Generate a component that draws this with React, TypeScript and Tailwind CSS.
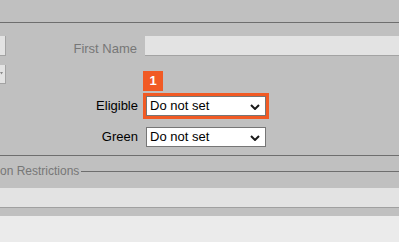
const labelFont = "font-['Liberation_Sans',Arial,sans-serif]"

function FakeSelect({ value }: { value: string }) {
  return (
    <div className="relative flex h-[20px] w-[120px] items-center border border-[#767676] bg-white pl-[3px] text-[13px] leading-[18px] text-black">
      <span>{value}</span>
      <svg
        className="absolute right-[5px] top-[7px]"
        width="10"
        height="6"
        viewBox="0 0 10 6"
        aria-hidden
      >
        <path d="M1 1 L5 5 L9 1" fill="none" stroke="#1a1a1a" strokeWidth="2" />
      </svg>
    </div>
  )
}

export default function App() {
  return (
    <div className={`h-[242px] w-[399px] overflow-hidden bg-[#c0c0c0] ${labelFont}`}>
      <div className="h-[23px] border-b border-[#6e6e6e]" />

      <div className="mt-[13px] flex h-[20px]">
        <div className="h-[20px] w-[6px] border-r border-b border-[#a3a3a3] bg-[#e3e3e3]" />
        <span className="w-[131px] text-right text-[13px] leading-[26px] text-[#777777]">First Name</span>
        <div className="ml-[8px] h-[20px] flex-1 border-b border-[#a3a3a3] bg-[#e3e3e3]" />
      </div>

      <div className="mt-[9px] flex h-[19px]">
        <div className="relative h-[19px] w-[6px] border-r border-b border-[#a3a3a3] bg-[#e3e3e3]">
          <svg className="absolute left-0 top-[7px]" width="3" height="3" viewBox="0 0 3 3" aria-hidden>
            <path d="M0 0 L3 0 L1.5 2.5 Z" fill="#8a8a8a" />
          </svg>
        </div>
      </div>

      <div className="mt-[9px] flex h-[26px] items-center">
        <span className="w-[138px] text-right text-[13px] leading-[20px] text-black">Eligible</span>
        <div className="relative ml-[5px] border-[3px] border-[#f15a24]">
          <span className="absolute -left-[3px] -top-[25px] flex h-[20px] w-[20px] items-center justify-center bg-[#f15a24] text-[13px] font-bold text-white">
            1
          </span>
          <FakeSelect value="Do not set" />
        </div>
      </div>

      <div className="mt-[8px] flex h-[20px] items-center">
        <span className="w-[138px] text-right text-[13px] leading-[20px] text-black">Green</span>
        <div className="ml-[8px]">
          <FakeSelect value="Do not set" />
        </div>
      </div>

      <div className="mt-[8px] h-px bg-[#6e6e6e]" />

      <div className="flex h-[32px] items-start">
        <span className="mt-[8px] whitespace-nowrap text-[12px] leading-[14px] text-[#777777]">on Restrictions</span>
        <div className="ml-[2px] mt-[15px] h-px flex-1 bg-[#6e6e6e]" />
      </div>

      <div className="h-[20px] border-b border-[#a0a0a0] bg-[#e3e3e3]" />
      <div className="h-[8px]" />
      <div className="h-full bg-[#ebebeb]" />
    </div>
  )
}
